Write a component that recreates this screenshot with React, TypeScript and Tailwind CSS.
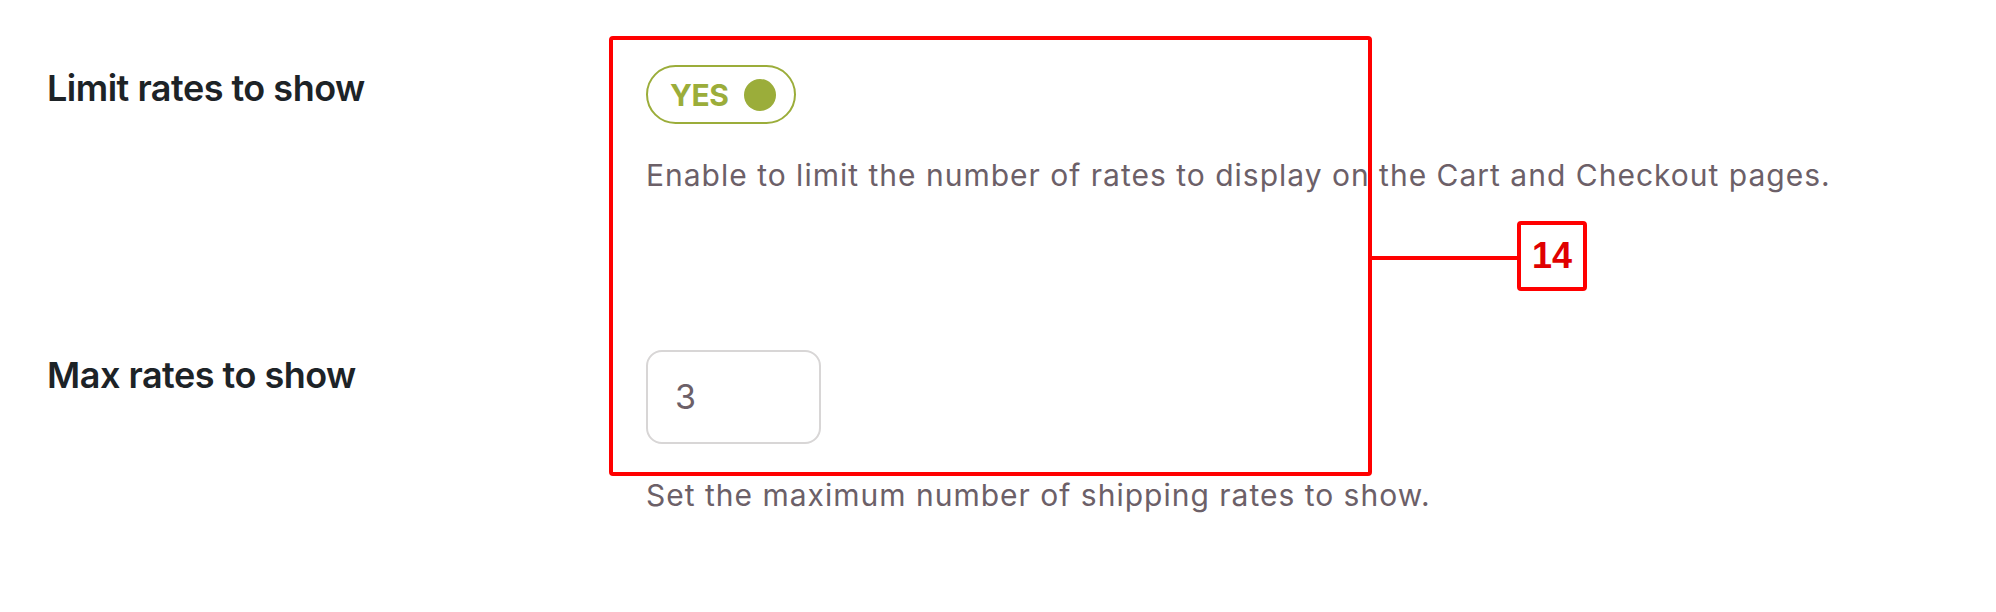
import React from "react";

export default function App() {
  const font = { fontFamily: "Inter, 'Noto Sans', sans-serif" } as React.CSSProperties;
  return (
    <div className="relative w-[1996px] h-[612px] bg-white overflow-hidden" style={font}>
      <div className="flex flex-col pl-[47px] pt-[65px]">
        {/* Row 1 */}
        <div className="flex">
          <div className="w-[599px] shrink-0 mt-[5px] text-[36px] leading-none font-semibold tracking-[-0.5px] text-[#1d2327]">
            Limit rates to show
          </div>
          <div className="flex flex-col items-start">
            <div className="flex items-center h-[59px] w-[150px] rounded-full border-2 border-[#9bad3a] pl-[22px] pr-[18px] justify-between">
              <span className="text-[30px] leading-none font-bold text-[#9bad3a] tracking-[-0.5px]">YES</span>
              <span className="w-[32px] h-[32px] rounded-full bg-[#9bad3a]" />
            </div>
            <p className="mt-[36px] text-[30px] leading-none tracking-[1px] text-[#6c6068] whitespace-nowrap">
              Enable to limit the number of rates to display on the Cart and Checkout pages.
            </p>
          </div>
        </div>
        {/* Row 2 */}
        <div className="flex mt-[160px]">
          <div className="w-[599px] shrink-0 mt-[7px] text-[36px] leading-none font-semibold tracking-[-0.5px] text-[#1d2327]">
            Max rates to show
          </div>
          <div className="flex flex-col items-start">
            <div className="flex items-center h-[94px] w-[175px] rounded-[16px] border-2 border-[#d8d6d6] pl-[27px]">
              <span className="text-[34px] leading-none text-[#6c6068]">3</span>
            </div>
            <p className="mt-[36px] text-[30px] leading-none tracking-[1px] text-[#6c6068] whitespace-nowrap">
              Set the maximum number of shipping rates to show.
            </p>
          </div>
        </div>
      </div>

      {/* Annotation overlay */}
      <div className="absolute left-[609px] top-[36px] w-[763px] h-[440px] border-4 border-[#ff0000] rounded-[4px]" />
      <div className="absolute left-[1372px] top-[256px] w-[145px] h-[4px] bg-[#ff0000]" />
      <div className="absolute left-[1517px] top-[221px] w-[70px] h-[70px] border-4 border-[#ff0000] rounded-[4px] bg-white flex items-center justify-center">
        <span className="text-[36px] leading-none font-bold text-[#e00000]" style={{ fontFamily: "'Liberation Sans', Arial, sans-serif" }}>
          14
        </span>
      </div>
    </div>
  );
}
